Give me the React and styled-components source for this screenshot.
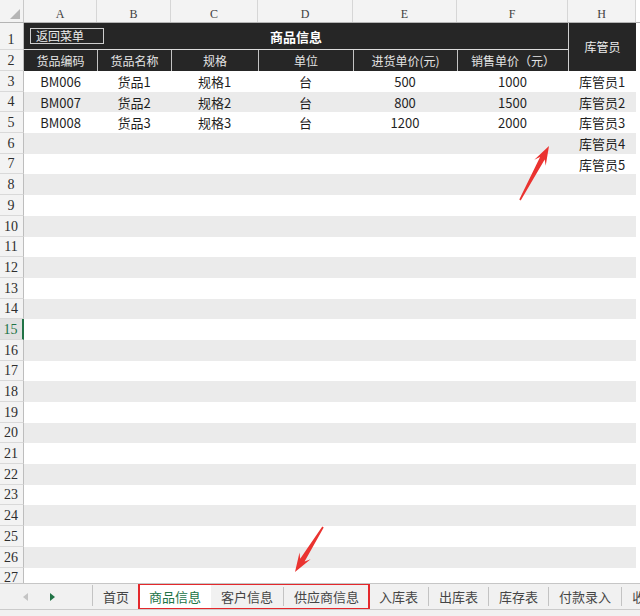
import React from 'react';
import styled, { createGlobalStyle } from 'styled-components';

const GlobalStyle = createGlobalStyle`
  html, body { margin: 0; padding: 0; background: #fff; overflow: hidden; }
  * { box-sizing: border-box; }
`;

const COLS = '24px 73px 74px 87px 95px 104px 111px 68px 1fr';
const CJK = '"Noto Sans CJK SC", "Noto Sans", sans-serif';
const SERIF = '"Liberation Serif", "DejaVu Serif", serif';

const Frame = styled.div`
  position: relative;
  width: 640px;
  height: 616px;
  display: flex;
  flex-direction: column;
  overflow: hidden;
  background: #fff;
  font-family: ${CJK};
`;

const Sheet = styled.div`
  flex: 1;
  min-height: 0;
  overflow: hidden;
  display: flex;
  flex-direction: column;
`;

const LetterRow = styled.div`
  flex-shrink: 0;
  display: grid;
  grid-template-columns: ${COLS};
  height: 23px;
  background: #f3f3f3;
  border-bottom: 1px solid #b4b4b4;
`;

const Corner = styled.div`
  display: flex;
  align-items: flex-end;
  justify-content: flex-end;
  padding: 0 3px 3px 0;
  border-right: 1px solid #c9c9c9;
`;

const Letter = styled.div`
  display: flex;
  align-items: center;
  justify-content: center;
  padding-top: 6px;
  border-right: 1px solid #d6d6d6;
  font-family: ${SERIF};
  font-size: 12px;
  color: #404040;
`;

const Blank = styled.div`
  background: #fff;
`;

const HeaderBlock = styled.div`
  flex-shrink: 0;
  display: grid;
  grid-template-columns: ${COLS};
  grid-template-rows: 27px 21px;
`;

const RowNum = styled.div`
  grid-column: 1;
  grid-row: ${p => p.$row || 'auto'};
  display: flex;
  align-items: flex-end;
  justify-content: center;
  padding: 0 1px 2px 0;
  background: ${p => (p.$active ? '#e1e1e1' : '#f3f3f3')};
  border-right: ${p => (p.$active ? '2px solid #217346' : '1px solid #bdbdbd')};
  border-bottom: 1px solid #d9d9d9;
  font-family: ${SERIF};
  font-size: 14px;
  line-height: 1;
  color: ${p => (p.$active ? '#217346' : '#2e2e2e')};
`;

const TitleBar = styled.div`
  grid-column: 2 / 8;
  grid-row: 1;
  display: grid;
  grid-template-columns: 1fr auto 1fr;
  align-items: center;
  background: #262626;
  border-bottom: 1px solid #dcdcdc;
`;

const MenuButton = styled.div`
  justify-self: start;
  margin-left: 6px;
  width: 74px;
  height: 16px;
  display: flex;
  align-items: center;
  padding-left: 5px;
  border: 1px solid #cfcfcf;
  color: #ececec;
  font-size: 12px;
  line-height: 1;
`;

const Title = styled.div`
  color: #fff;
  font-size: 13px;
  font-weight: 700;
  line-height: 1;
`;

const ManagerHead = styled.div`
  grid-column: 8;
  grid-row: 1 / 3;
  display: flex;
  align-items: center;
  justify-content: center;
  background: #262626;
  border-left: 1px solid #d0d0d0;
  color: #ededed;
  font-size: 12px;
  line-height: 1;
`;

const HeadCell = styled.div`
  grid-row: 2;
  display: flex;
  align-items: center;
  justify-content: center;
  background: #262626;
  border-left: ${p => (p.$first ? 'none' : '1px solid #c4c4c4')};
  color: #e4e4e4;
  font-size: 12px;
  line-height: 1;
`;

const SideBlank = styled.div`
  grid-column: 9;
  grid-row: 1 / 3;
  background: #fff;
`;

const DataRow = styled.div`
  flex-shrink: 0;
  display: grid;
  grid-template-columns: ${COLS};
  height: 20.7px;
`;

const Cell = styled.div`
  display: flex;
  align-items: center;
  justify-content: center;
  background: ${p => (p.$striped ? '#ebebeb' : '#fff')};
  color: #1f1f1f;
  font-size: 13px;
  line-height: 1;
`;

const TabBar = styled.div`
  flex-shrink: 0;
  height: 33px;
  display: flex;
  flex-direction: column;
  background: #f1f1f1;
  border-top: 1px solid #c6c6c6;
`;

const TabStrip = styled.div`
  height: 26px;
  display: flex;
  align-items: stretch;
  overflow: hidden;
  border-bottom: 1px solid #cbcbcb;
`;

const Nav = styled.div`
  flex-shrink: 0;
  width: 92px;
  display: flex;
  align-items: center;
  gap: 22px;
  padding-left: 23px;
`;

const Sep = styled.div`
  width: 1px;
  flex-shrink: 0;
  margin: ${p => (p.$tall ? '1px 0 3px' : '3px 0 3px')};
  background: #c3c3c3;
`;

const Tab = styled.div`
  flex-shrink: 0;
  display: flex;
  align-items: center;
  padding: 0 10px 1px;
  background: ${p => (p.$active ? '#fff' : 'transparent')};
  color: ${p => (p.$active ? '#217346' : '#454545')};
  font-size: 13px;
  line-height: 1;
  white-space: nowrap;
`;

const Highlight = styled.div`
  flex-shrink: 0;
  position: relative;
  display: flex;
  align-items: stretch;
  outline: 2px solid #e4282c;
  outline-offset: -1px;
  z-index: 1;
`;

const Overlay = styled.svg`
  position: absolute;
  left: 0;
  top: 0;
  pointer-events: none;
`;

const cols = ['A', 'B', 'C', 'D', 'E', 'F', 'H'];
const heads = ['货品编码', '货品名称', '规格', '单位', '进货单价(元)', '销售单价（元）'];
const goods = [
  ['BM006', '货品1', '规格1', '台', '500', '1000'],
  ['BM007', '货品2', '规格2', '台', '800', '1500'],
  ['BM008', '货品3', '规格3', '台', '1200', '2000'],
];
const managers = ['库管员1', '库管员2', '库管员3', '库管员4', '库管员5'];

function arrowPoints(t, p) {
  const dx = p[0] - t[0];
  const dy = p[1] - t[1];
  const len = Math.hypot(dx, dy);
  const d = [dx / len, dy / len];
  const n = [-d[1], d[0]];
  const at = (back, side) => [p[0] - d[0] * back + n[0] * side, p[1] - d[1] * back + n[1] * side];
  const pts = [
    p,
    at(19, 6.5),
    at(14, 2.6),
    [t[0] + n[0] * 0.8, t[1] + n[1] * 0.8],
    [t[0] - n[0] * 0.8, t[1] - n[1] * 0.8],
    at(14, -2.6),
    at(19, -6.5),
  ];
  return pts.map(q => `${q[0].toFixed(1)},${q[1].toFixed(1)}`).join(' ');
}

const Tri = ({ dir, color }) => (
  <svg width="5" height="8" viewBox="0 0 5 8">
    {dir === 'left' ? <polygon points="5,0 5,8 0,4" fill={color} /> : <polygon points="0,0 0,8 5,4" fill={color} />}
  </svg>
);

export default function App() {
  const rows = [];
  for (let r = 3; r <= 27; r++) {
    const striped = r % 2 === 0;
    const g = goods[r - 3] || ['', '', '', '', '', ''];
    const m = managers[r - 3] || '';
    rows.push(
      <DataRow key={r}>
        <RowNum $active={r === 15}>{r}</RowNum>
        {g.map((v, i) => (
          <Cell key={i} $striped={striped}>{v}</Cell>
        ))}
        <Cell $striped={striped}>{m}</Cell>
        <Blank />
      </DataRow>
    );
  }

  return (
    <>
      <GlobalStyle />
      <Frame>
        <Sheet>
          <LetterRow>
            <Corner>
              <svg width="10" height="10" viewBox="0 0 10 10">
                <polygon points="10,0 10,10 0,10" fill="#b5b5b5" />
              </svg>
            </Corner>
            {cols.map(c => (
              <Letter key={c}>{c}</Letter>
            ))}
            <Blank />
          </LetterRow>

          <HeaderBlock>
            <RowNum $row={1}>1</RowNum>
            <TitleBar>
              <MenuButton>返回菜单</MenuButton>
              <Title>商品信息</Title>
              <span />
            </TitleBar>
            <ManagerHead>库管员</ManagerHead>
            <SideBlank />
            <RowNum $row={2}>2</RowNum>
            {heads.map((h, i) => (
              <HeadCell key={h} $first={i === 0}>{h}</HeadCell>
            ))}
          </HeaderBlock>

          {rows}
        </Sheet>

        <TabBar>
          <TabStrip>
            <Nav>
              <Tri dir="left" color="#c4c4c4" />
              <Tri dir="right" color="#217346" />
            </Nav>
            <Sep $tall />
            <Tab>首页</Tab>
            <Highlight>
              <Tab $active>商品信息</Tab>
              <Tab>客户信息</Tab>
              <Sep />
              <Tab>供应商信息</Tab>
            </Highlight>
            <Tab>入库表</Tab>
            <Sep />
            <Tab>出库表</Tab>
            <Sep />
            <Tab>库存表</Tab>
            <Sep />
            <Tab>付款录入</Tab>
            <Sep />
            <Tab>收款</Tab>
          </TabStrip>
        </TabBar>

        <Overlay width="640" height="616" viewBox="0 0 640 616">
          <polygon points={arrowPoints([520, 200], [549, 146])} fill="#ea3330" />
          <polygon points={arrowPoints([323, 527], [295, 572])} fill="#ea3330" />
        </Overlay>
      </Frame>
    </>
  );
}
